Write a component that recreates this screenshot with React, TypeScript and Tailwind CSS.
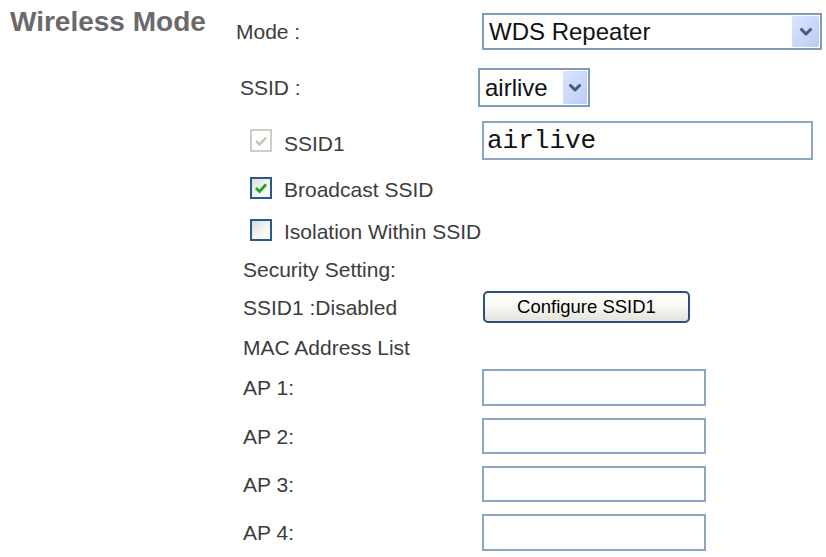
import React from "react";

const font = { fontFamily: '"Liberation Sans", Arial, sans-serif' };

function Chevron() {
  return (
    <svg width="12" height="8" viewBox="0 0 12 8">
      <path d="M1.5 1.5 L6 6 L10.5 1.5" fill="none" stroke="#46597f" strokeWidth="3" strokeLinecap="round" strokeLinejoin="round" />
    </svg>
  );
}

function Select({ text, w, h, btnW }: { text: string; w: number; h: number; btnW: number }) {
  return (
    <div
      className="flex items-stretch border-2 border-[#7f9db9] bg-white p-px"
      style={{ width: w, height: h }}
    >
      <div className="flex flex-1 items-center pl-[4px] text-[24px] leading-none text-[#111]">{text}</div>
      <div
        className="flex items-center justify-center rounded-[2px] bg-gradient-to-br from-[#dbe5fd] to-[#b9cbf6]"
        style={{ width: btnW }}
      >
        <Chevron />
      </div>
    </div>
  );
}

function TextBox({ w, h, value }: { w: number; h: number; value?: string }) {
  return (
    <div
      className="flex items-center border-2 border-[#8ea6c6] bg-white pl-[3px]"
      style={{ width: w, height: h }}
    >
      {value && (
        <span className="text-[26px] leading-none text-[#111]" style={{ fontFamily: '"Liberation Mono", "Courier New", monospace' }}>
          {value}
        </span>
      )}
    </div>
  );
}

function Check({ state }: { state: "disabled" | "checked" | "empty" }) {
  if (state === "disabled") {
    return (
      <div className="flex h-[23px] w-[22px] items-center justify-center border-2 border-[#cfcdc2] bg-white">
        <svg width="14" height="12" viewBox="0 0 14 12">
          <path d="M2 6 L5.5 9.5 L12 2.5" fill="none" stroke="#c4c2b6" strokeWidth="2.4" />
        </svg>
      </div>
    );
  }
  return (
    <div className="flex h-[22px] w-[22px] items-center justify-center border-2 border-[#2a5a8c] bg-gradient-to-br from-[#dcdcd6] via-[#f3f3f1] to-white">
      {state === "checked" && (
        <svg width="14" height="12" viewBox="0 0 14 12">
          <path d="M2 6 L5.5 9.5 L12 2.5" fill="none" stroke="#22a022" strokeWidth="2.8" />
        </svg>
      )}
    </div>
  );
}

function Label({ children, pl = 7 }: { children: React.ReactNode; pl?: number }) {
  return (
    <div className="flex w-[246px] shrink-0 items-center text-[21px] leading-none text-[#3c3c3c]" style={{ paddingLeft: pl }}>
      {children}
    </div>
  );
}

export default function App() {
  return (
    <div className="flex h-[557px] w-[826px] bg-white" style={font}>
      <div className="w-[236px] shrink-0 pl-[10px] pt-[8px]">
        <div className="text-[28px] font-bold leading-[28px] text-[#6a6a6a]">Wireless Mode</div>
      </div>
      <div className="flex flex-col">
        <div className="mt-[13px] flex h-[37px] items-center">
          <Label pl={0}>Mode :</Label>
          <Select text="WDS Repeater" w={340} h={37} btnW={27} />
        </div>
        <div className="mt-[18px] flex h-[39px] items-center">
          <Label pl={4}>SSID :</Label>
          <div className="-ml-[4px]">
            <Select text="airlive" w={112} h={39} btnW={24} />
          </div>
        </div>
        <div className="mt-[14px] flex h-[39px] items-center">
          <Label pl={14}>
            <Check state="disabled" />
            <span className="ml-[12px] mt-[5px]">SSID1</span>
          </Label>
          <TextBox w={331} h={39} value="airlive" />
        </div>
        <div className="mt-[17px] flex h-[22px] items-center">
          <Label pl={14}>
            <Check state="checked" />
            <span className="ml-[12px] mt-[3px]">Broadcast SSID</span>
          </Label>
        </div>
        <div className="mt-[20px] flex h-[22px] items-center">
          <Label pl={14}>
            <Check state="empty" />
            <span className="ml-[12px] mt-[3px]">Isolation Within SSID</span>
          </Label>
        </div>
        <div className="mt-[17px] flex h-[22px] items-center">
          <Label>Security Setting:</Label>
        </div>
        <div className="mt-[11px] flex h-[32px] items-center">
          <Label>SSID1 :Disabled</Label>
          <div className="ml-px flex h-[32px] w-[207px] items-center justify-center rounded-[5px] border-2 border-[#2d4f7f] bg-gradient-to-b from-white via-[#f6f6f3] to-[#e4e2da] text-[18.5px] leading-none text-black">
            Configure SSID1
          </div>
        </div>
        <div className="mt-[13px] flex h-[22px] items-center">
          <Label>MAC Address List</Label>
        </div>
        <div className="mt-[11px] flex h-[37px] items-center">
          <Label>AP 1:</Label>
          <TextBox w={224} h={37} />
        </div>
        <div className="mt-[12px] flex h-[36px] items-center">
          <Label>AP 2:</Label>
          <TextBox w={224} h={36} />
        </div>
        <div className="mt-[12px] flex h-[36px] items-center">
          <Label>AP 3:</Label>
          <TextBox w={224} h={36} />
        </div>
        <div className="mt-[12px] flex h-[37px] items-center">
          <Label>AP 4:</Label>
          <TextBox w={224} h={37} />
        </div>
      </div>
    </div>
  );
}
